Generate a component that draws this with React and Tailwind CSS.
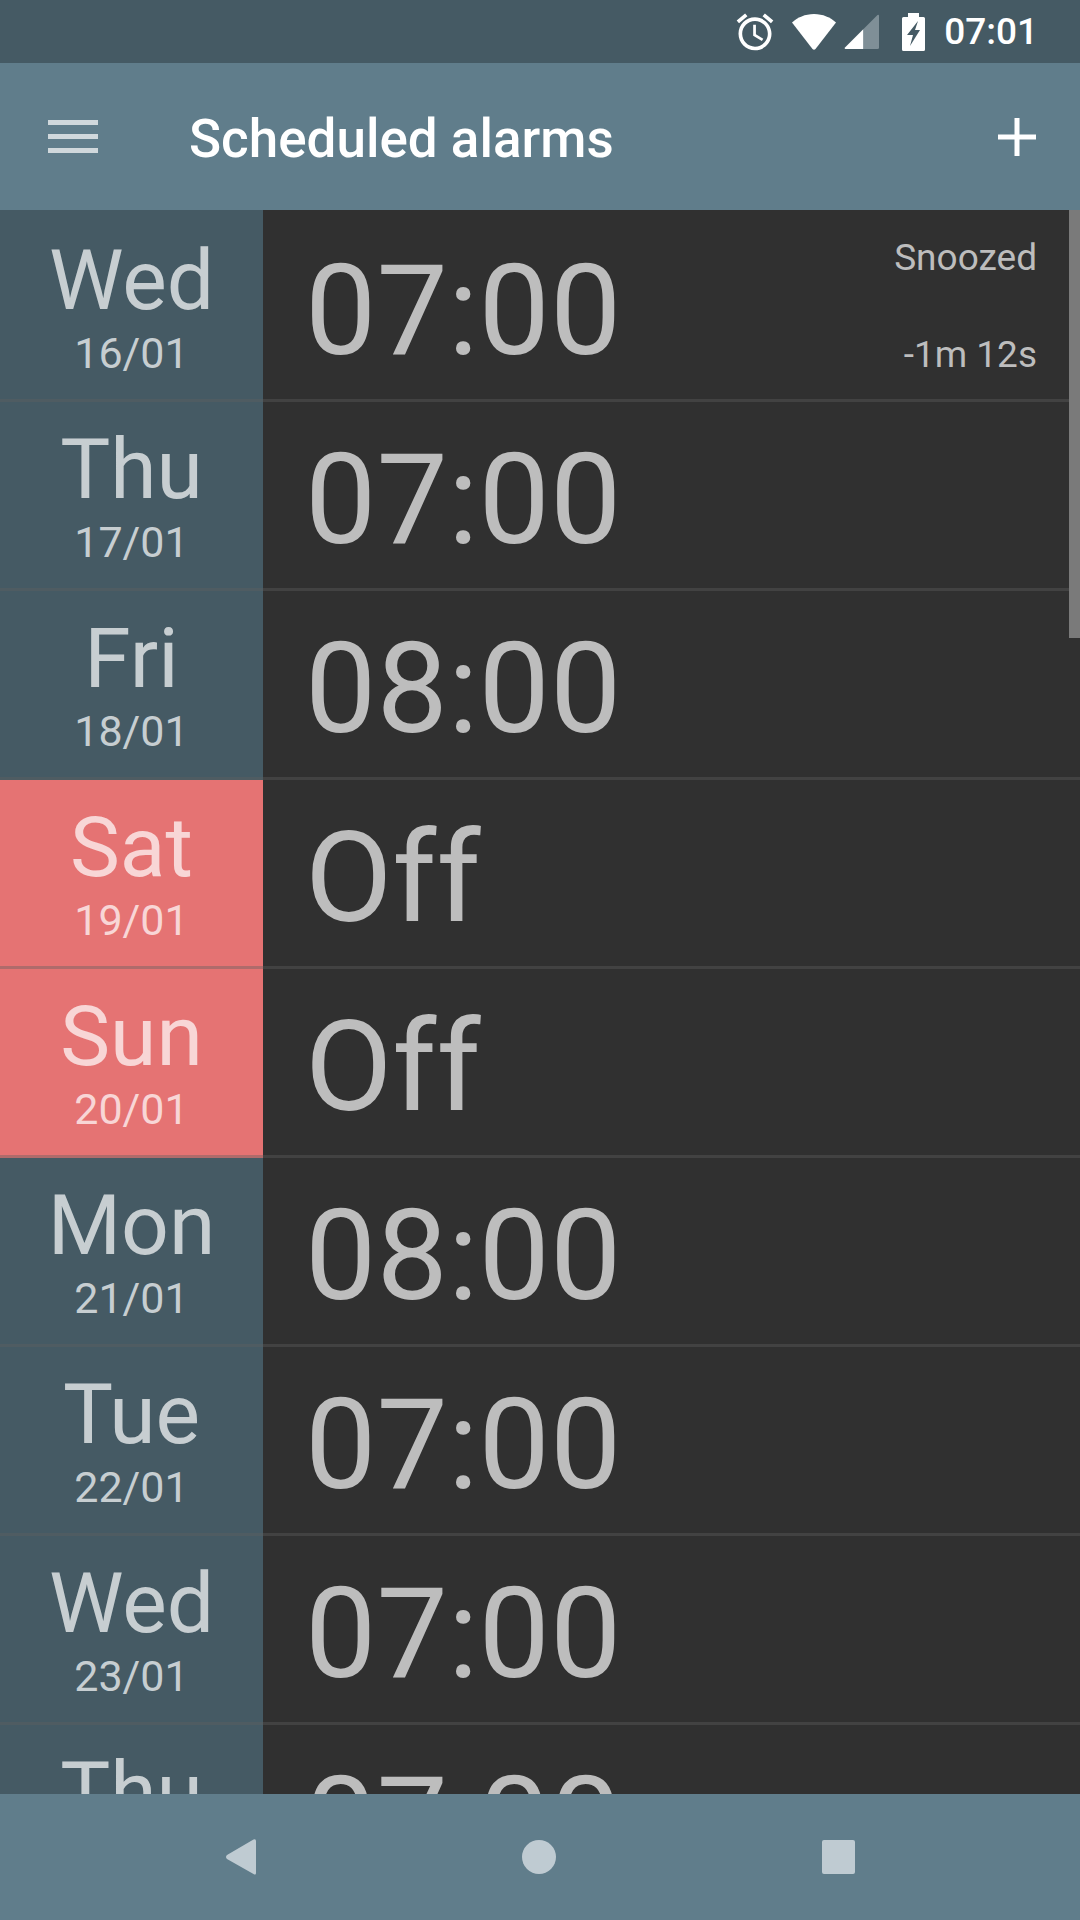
const rows = [
  { day: 'Wed', date: '16/01', time: '07:00', snoozed: true },
  { day: 'Thu', date: '17/01', time: '07:00' },
  { day: 'Fri', date: '18/01', time: '08:00' },
  { day: 'Sat', date: '19/01', time: 'Off', off: true },
  { day: 'Sun', date: '20/01', time: 'Off', off: true },
  { day: 'Mon', date: '21/01', time: '08:00' },
  { day: 'Tue', date: '22/01', time: '07:00' },
  { day: 'Wed', date: '23/01', time: '07:00' },
  { day: 'Thu', date: '24/01', time: '07:00' },
];

function StatusBar() {
  return (
    <div className="flex h-[63px] shrink-0 items-center justify-end bg-[#455a64] pr-[42px] text-white">
      <svg className="h-[44px] w-[44px]" viewBox="0 0 24 24" fill="#fff">
        <path d="M22 5.72l-4.6-3.86-1.29 1.53 4.6 3.86L22 5.72zM7.88 3.39L6.6 1.86 2 5.71l1.29 1.53 4.59-3.85zM12.5 8H11v6l4.75 2.85.75-1.23-4-2.37V8zM12 4c-4.97 0-9 4.03-9 9s4.02 9 9 9c4.97 0 9-4.03 9-9s-4.03-9-9-9zm0 16c-3.87 0-7-3.13-7-7s3.13-7 7-7 7 3.13 7 7-3.13 7-7 7z" />
      </svg>
      <svg className="ml-[14px] h-[38px] w-[46px]" viewBox="0 0 46 38" fill="#fff">
        <path d="M1 9.5C6.5 4.5 14 1 23 1s16.5 3.5 22 8.5L24.5 36q-1.5 1.5-3 0Z" />
      </svg>
      <svg className="ml-[7px] h-[36px] w-[36px]" viewBox="0 0 36 36">
        <path d="M19.5 15V35H1.5Q0 35 1 33.5Z" fill="#fff" />
        <path d="M19.5 15 33.5 1Q35 0 35 2V33.5Q35 35 33.5 35H19.5Z" fill="#7f8f97" />
      </svg>
      <svg className="ml-[22px] h-[38px] w-[23px]" viewBox="0 0 23 38">
        <path fillRule="evenodd" fill="#fff" d="M6 0h11v4h4.5q1.5 0 1.5 1.5v31q0 1.5-1.5 1.5h-20Q0 38 0 36.5v-31Q0 4 1.5 4H6ZM16 8 5 22h6l-3 11 10-16h-5Z" />
      </svg>
      <span className="ml-[19px] text-[37px] leading-none font-medium">07:01</span>
    </div>
  );
}

function Toolbar() {
  return (
    <div className="flex h-[147px] shrink-0 items-center bg-[#607d8b] pr-[44px] pl-[48px]">
      <div className="flex w-[50px] flex-col gap-[9px]">
        <div className="h-[5px] bg-[#d0d8dc]" />
        <div className="h-[5px] bg-[#d0d8dc]" />
        <div className="h-[5px] bg-[#d0d8dc]" />
      </div>
      <h1 className="mt-[5px] ml-[91px] flex-1 text-[53px] leading-none font-medium text-white">Scheduled alarms</h1>
      <svg className="h-[38px] w-[38px]" viewBox="0 0 38 38" fill="#fff">
        <path d="M16.5 0h5v16.5H38v5H21.5V38h-5V21.5H0v-5h16.5Z" />
      </svg>
    </div>
  );
}

function AlarmRow({ row }) {
  return (
    <div className="flex h-[189px] shrink-0">
      <div className={`flex w-[263px] shrink-0 flex-col items-center border-b-[3px] border-[#5f5f5f]/40 pt-[26px] ${row.off ? 'bg-[#e57373] text-[#f8d6d6]' : 'bg-[#455a64] text-[#c7ced1]'}`}>
        <span className="text-[84px] leading-[84px]">{row.day}</span>
        <span className="mt-[9px] text-[43px] leading-[43px]">{row.date}</span>
      </div>
      <div className="flex flex-1 items-center justify-between border-b-[3px] border-[#5f5f5f]/40 pr-[43px] pl-[42px] text-[#bdbdbd]">
        <span className="mt-[8px] text-[127px] leading-none">{row.time}</span>
        {row.snoozed && (
          <div className="flex h-full flex-col items-end pt-[24px] text-[37px] leading-[42px]">
            <span>Snoozed</span>
            <span className="mt-[55px]">-1m 12s</span>
          </div>
        )}
      </div>
    </div>
  );
}

export default function App() {
  return (
    <div className="flex h-[1920px] w-[1080px] flex-col overflow-hidden bg-[#303030] font-['Roboto',sans-serif]">
      <StatusBar />
      <Toolbar />
      <div className="relative flex min-h-0 flex-1 flex-col overflow-hidden">
        <div className="h-[3px] w-[263px] shrink-0 bg-[#455a64]" />
        {rows.map((row) => (
          <AlarmRow key={row.date} row={row} />
        ))}
        {/* scrollbar thumb */}
        <div className="absolute top-0 right-0 h-[428px] w-[11px] bg-[#7a7a7a]" />
      </div>
      <div className="flex h-[126px] shrink-0 items-center justify-between bg-[#607d8b] pr-[225px] pl-[226px]">
        <svg className="h-[36px] w-[30px]" viewBox="0 0 30 36" fill="#bfcbd2">
          <path d="M27.5 0.5Q30 -0.5 30 2V34Q30 36.5 27.5 35L1 20Q-1 18 1 16Z" />
        </svg>
        <div className="h-[34px] w-[34px] rounded-full bg-[#bfcbd2]" />
        <div className="h-[34px] w-[33px] rounded-[2px] bg-[#bfcbd2]" />
      </div>
    </div>
  );
}
